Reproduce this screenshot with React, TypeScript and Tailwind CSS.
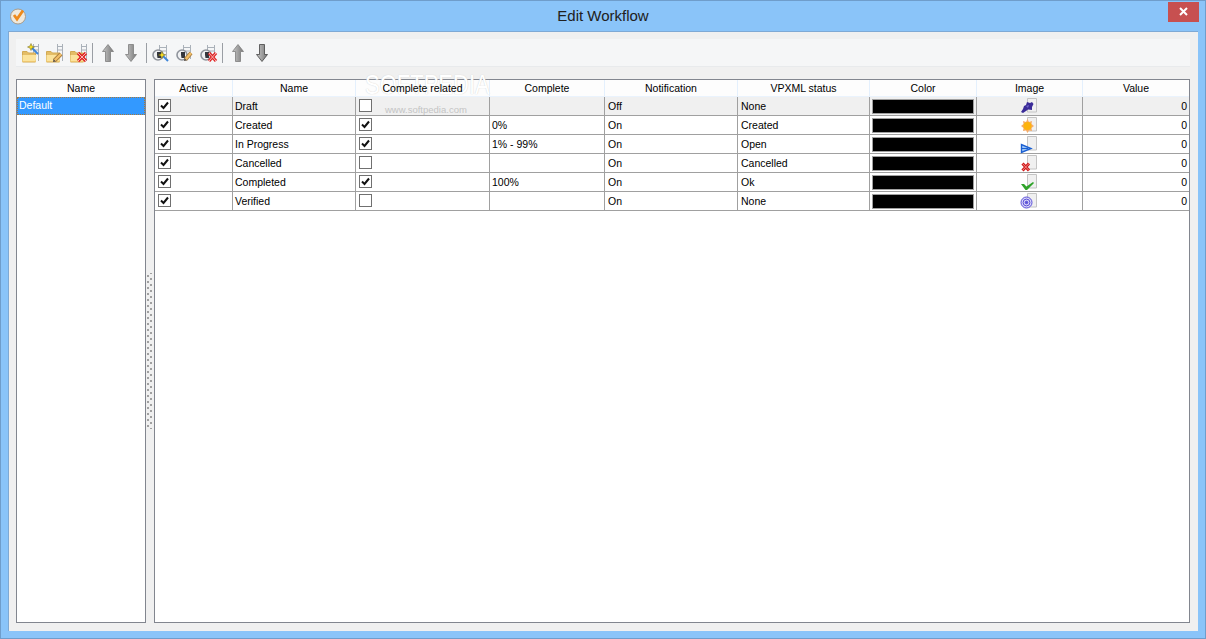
import React from "react";

const cols = ["w-[78px]", "w-[123px]", "w-[134px]", "w-[115px]", "w-[133px]", "w-[132px]", "w-[107px]", "w-[106px]", "w-[106px]"];
const heads = ["Active", "Name", "Complete related", "Complete", "Notification", "VPXML status", "Color", "Image", "Value"];

const rows = [
  { name: "Draft", rel: false, c: "", n: "Off", v: "None", icon: "pin" },
  { name: "Created", rel: true, c: "0%", n: "On", v: "Created", icon: "sun" },
  { name: "In Progress", rel: true, c: "1% - 99%", n: "On", v: "Open", icon: "play" },
  { name: "Cancelled", rel: false, c: "", n: "On", v: "Cancelled", icon: "x" },
  { name: "Completed", rel: true, c: "100%", n: "On", v: "Ok", icon: "check" },
  { name: "Verified", rel: false, c: "", n: "On", v: "None", icon: "target" },
];

function Check({ on }: { on: boolean }) {
  return (
    <div className="w-[13px] h-[13px] border border-[#707070] bg-white flex items-center justify-center">
      {on && (
        <svg width="9" height="9" viewBox="0 0 9 9">
          <path d="M1 4.5 L3.5 7 L8 1.5" fill="none" stroke="#111" strokeWidth="2" />
        </svg>
      )}
    </div>
  );
}

function RowIcon({ kind }: { kind: string }) {
  return (
    <svg width="20" height="19" viewBox="0 0 20 19">
      <path d="M7.5 1.5 H16.5 V15 H7.5 Z" fill="#f0f0f0" stroke="#c4c4c4" />
      {kind === "pin" && (
        <g>
          <path d="M1 15 L3 12 L4 9 L6 8 L7 5 L10 6 L12 5 L13.5 7 L12 10 L12 13 L8 12.5 L6 14 L3 16 Z" fill="#3b2c98" />
          <path d="M6 9 L9 8 L8 11 Z" fill="#6e62c8" />
        </g>
      )}
      {kind === "sun" && (
        <g>
          <path d="M7.5 3 L9 6 L12 5 L11.5 8 L14 10 L11.5 12 L12 15 L9 14.5 L7.5 17 L6 14.5 L3 15 L3.5 12 L1 10 L3.5 8 L3 5 L6 6 Z" fill="#f6ac68" />
          <circle cx="7.5" cy="10" r="4" fill="#fdb30c" />
        </g>
      )}
      {kind === "play" && (
        <g>
          <path d="M1.5 9.5 L1.5 17.5 L11 13.5 Z" fill="#9cc6f6" stroke="#1a5fd2" strokeWidth="1.4" />
          <path d="M2 13.5 H8" stroke="#1a5fd2" />
        </g>
      )}
      {kind === "x" && (
        <g>
          <path d="M2.5 9.5 L9 16.5 M9 9.5 L2.5 16.5" stroke="#d01818" strokeWidth="3" />
          <path d="M2.5 9.5 L9 16.5 M9 9.5 L2.5 16.5" stroke="#f4a0a0" strokeWidth="0.8" />
        </g>
      )}
      {kind === "check" && (
        <path d="M1 11 L4 11 L6.5 13.5 L13 9 L14 10 L7 17 L5.5 17 Z" fill="#2fa32a" />
      )}
      {kind === "target" && (
        <g fill="none" stroke="#5a50d8">
          <circle cx="6.5" cy="10.5" r="5.5" fill="#d8d4f8" />
          <circle cx="6.5" cy="10.5" r="3.4" />
          <circle cx="6.5" cy="10.5" r="1.3" fill="#5a50d8" />
        </g>
      )}
    </svg>
  );
}

function Wand({ x, y, ex, ey }: { x: number; y: number; ex: number; ey: number }) {
  return (
    <g>
      <path d={`M${x} ${y} L${ex} ${ey}`} stroke="#3f86d8" strokeWidth="2" />
      <path
        d={`M${x} ${y - 3.5} L${x + 1} ${y - 1} L${x + 3.5} ${y} L${x + 1} ${y + 1} L${x} ${y + 3.5} L${x - 1} ${y + 1} L${x - 3.5} ${y} L${x - 1} ${y - 1} Z`}
        fill="#f5dc20"
        stroke="#6a6020"
        strokeWidth="0.5"
      />
    </g>
  );
}

function Pen({ sx, sy, ex, ey }: { sx: number; sy: number; ex: number; ey: number }) {
  return (
    <g>
      <path d={`M${sx + 1.5} ${sy - 1.5} L${ex} ${ey}`} stroke="#a87a3a" strokeWidth="4" />
      <path d={`M${sx + 1.5} ${sy - 1.5} L${ex} ${ey}`} stroke="#f2bf68" strokeWidth="2.4" />
      <path d={`M${sx} ${sy} L${sx + 0.5} ${sy - 3} L${sx + 3} ${sy - 0.5} Z`} fill="#5a5048" />
    </g>
  );
}

function Cross({ x1, y1, x2, y2 }: { x1: number; y1: number; x2: number; y2: number }) {
  const d = `M${x1} ${y1} L${x2} ${y2} M${x2} ${y1} L${x1} ${y2}`;
  return (
    <g>
      <path d={`M${x1 + 1} ${y1 + 3} H${x2 - 1} V${y2 - 3} H${x1 + 1} Z`} fill="#f07070" />
      <path d={d} stroke="#e02828" strokeWidth="3.2" />
      <path d={d} stroke="#f8b4b4" strokeWidth="1" />
    </g>
  );
}

function FolderIcon({ mark }: { mark: string }) {
  return (
    <svg width="20" height="20" viewBox="0 0 20 20">
      <path d="M13.5 1 V18 M18.5 1 V18 M13.5 3.5 H18.5 M13.5 7 H18.5" stroke="#aab1b9" fill="none" />
      <path d="M2.5 11 V8.5 H7 L8.5 10 H15.5 V19 H2.5 Z" fill="#e4bd66" stroke="#d2aa54" />
      <path d="M2.5 12 H16.5 L15.5 19 H2.5 Z" fill="#fbe39c" />
      <path d="M3 18.5 H15.5" stroke="#eec66e" />
      {mark === "wand" && <Wand x={11} y={4} ex={18} ey={11} />}
      {mark === "pen" && <Pen sx={9} sy={19} ex={17} ey={11} />}
      {mark === "x" && <Cross x1={10} y1={10} x2={18} y2={18} />}
    </svg>
  );
}

function ClockIcon({ mark }: { mark: string }) {
  return (
    <svg width="20" height="20" viewBox="0 0 20 20">
      <path d="M9.5 2 V16 M16.5 2 V16 M9.5 4.5 H16.5 M9.5 8 H16.5 M9.5 11.5 H16.5" stroke="#aab1b9" fill="none" />
      <circle cx="8" cy="12" r="5" fill="#f0f1f3" stroke="#8f949c" strokeWidth="1.6" />
      <path d="M7 9 H11 V15 H7.5 L7 12 Z" fill="#33363d" />
      {mark === "wand" && <Wand x={12} y={12} ex={18} ey={18} />}
      {mark === "pen" && <Pen sx={10} sy={18} ex={17} ey={10} />}
      {mark === "x" && <Cross x1={11} y1={10} x2={18} y2={18} />}
    </svg>
  );
}

function Arrow({ dir, dark }: { dir: "up" | "down"; dark?: boolean }) {
  const stroke = dark ? "#444" : "#7e7e7e";
  return (
    <svg width="14" height="20" viewBox="0 0 14 20">
      <defs>
        <linearGradient id={dark ? "ad" : "al"} x1="0" x2="1" y1="0" y2="0">
          <stop offset="0" stopColor="#c8c8c8" />
          <stop offset="1" stopColor="#787878" />
        </linearGradient>
      </defs>
      <path
        d={dir === "up" ? "M7 1.5 L12.5 8.5 H9.5 V18.5 H4.5 V8.5 H1.5 Z" : "M7 18.5 L12.5 11.5 H9.5 V1.5 H4.5 V11.5 H1.5 Z"}
        fill={`url(#${dark ? "ad" : "al"})`}
        stroke={stroke}
        strokeWidth="0.8"
      />
    </svg>
  );
}

function Sep() {
  return <div className="w-px h-[20px] bg-[#9a9ea4] shrink-0" />;
}

function Slot({ w, children }: { w: string; children: React.ReactNode }) {
  return <div className={`${w} shrink-0 flex justify-center`}>{children}</div>;
}

export default function App() {
  return (
    <div
      className="w-[1206px] h-[639px] bg-[#8ac4f9] border border-[#6f9dcb] flex flex-col overflow-hidden text-[10.5px] leading-none text-black"
      style={{ fontFamily: '"Liberation Sans", Arial, sans-serif' }}
    >
      <div className="h-[30px] flex items-center shrink-0 relative">
        <svg width="18" height="18" viewBox="0 0 18 18" className="ml-[8px]">
          <circle cx="9" cy="9.5" r="7.5" fill="#efe9dd" stroke="#a89c8c" />
          <path d="M5 8 L8 12 L14 3.5" fill="none" stroke="#ee8a1c" strokeWidth="2.8" />
        </svg>
        <div className="flex-1 text-center text-[15px] text-[#202020] pl-[11px] pb-[1px]">Edit Workflow</div>
        <div className="w-[31px] h-[20px] bg-[#c75050] mr-[6px] -mt-[9px] flex items-center justify-center">
          <svg width="9" height="9" viewBox="0 0 9 9">
            <path d="M1 1 L8 8 M8 1 L1 8" stroke="#fff" strokeWidth="2" />
          </svg>
        </div>
      </div>

      <div className="mx-[7px] mb-[7px] flex-1 bg-[#f0f0f0] border border-[#7fa9d4] border-b-0 border-r-0 pl-[7px] pr-[8px] pt-[7px] pb-[8px] flex flex-col min-h-0">
        <div className="h-[28px] shrink-0 bg-[#f5f6f7] border-b border-[#e8eaec] flex items-center pl-[2px]">
          <Slot w="w-[24px]"><FolderIcon mark="wand" /></Slot>
          <Slot w="w-[24px]"><FolderIcon mark="pen" /></Slot>
          <Slot w="w-[24px]"><FolderIcon mark="x" /></Slot>
          <div className="w-[2px] shrink-0" />
          <Sep />
          <Slot w="w-[30px]"><Arrow dir="up" /></Slot>
          <Slot w="w-[16px]"><Arrow dir="down" /></Slot>
          <div className="w-[7px] shrink-0" />
          <Sep />
          <div className="w-[1px] shrink-0" />
          <Slot w="w-[24px]"><ClockIcon mark="wand" /></Slot>
          <Slot w="w-[24px]"><ClockIcon mark="pen" /></Slot>
          <Slot w="w-[24px]"><ClockIcon mark="x" /></Slot>
          <div className="w-[2px] shrink-0" />
          <Sep />
          <Slot w="w-[30px]"><Arrow dir="up" /></Slot>
          <Slot w="w-[18px]"><Arrow dir="down" dark /></Slot>
        </div>

        <div className="flex flex-1 min-h-0 mt-[12px]">
          <div className="w-[130px] shrink-0 border border-[#82868f] bg-white flex flex-col">
            <div className="h-[17px] flex items-center justify-center bg-[#fdfdfd]">Name</div>
            <div className="h-[18px] bg-[#3399ff] text-white flex items-center pl-[2px] pb-[1px] outline-1 outline-dotted -outline-offset-1 outline-[#a87838]">
              Default
            </div>
          </div>

          <div className="w-[8px] shrink-0 relative flex items-center justify-center">
            <div
              className="w-[6px] h-[156px]"
              style={{
                backgroundImage:
                  "radial-gradient(#a0a0a0 1px, transparent 1px), radial-gradient(#a0a0a0 1px, transparent 1px)",
                backgroundSize: "6px 6px",
                backgroundPosition: "-2px 0, 1px 3px",
              }}
            />
          </div>

          <div className="flex-1 border border-[#82868f] bg-white relative">
            <div className="flex h-[17px] bg-[#fdfdfd] border-b border-[#eaf3fd]">
              {heads.map((h, i) => (
                <div
                  key={h}
                  className={`${cols[i]} shrink-0 flex items-center justify-center border-r border-[#e4f0fd] last:border-r-0 relative z-10`}
                >
                  {h}
                </div>
              ))}
            </div>
            {rows.map((r, ri) => (
              <div
                key={r.name}
                className={`flex h-[19px] border-b border-[#a0a0a0] ${ri === 0 ? "bg-[#f0f0f0]" : ""}`}
              >
                <div className={`${cols[0]} shrink-0 border-r border-[#a0a0a0] flex items-center pl-[3px] pb-[1px]`}>
                  <Check on />
                </div>
                <div className={`${cols[1]} shrink-0 border-r border-[#a0a0a0] flex items-center pl-[2px]`}>{r.name}</div>
                <div className={`${cols[2]} shrink-0 border-r border-[#a0a0a0] flex items-center pl-[3px] pb-[1px]`}>
                  <Check on={r.rel} />
                </div>
                <div className={`${cols[3]} shrink-0 border-r border-[#a0a0a0] flex items-center pl-[2px]`}>{r.c}</div>
                <div className={`${cols[4]} shrink-0 border-r border-[#a0a0a0] flex items-center pl-[3px]`}>{r.n}</div>
                <div className={`${cols[5]} shrink-0 border-r border-[#a0a0a0] flex items-center pl-[3px]`}>{r.v}</div>
                <div className={`${cols[6]} shrink-0 border-r border-[#a0a0a0] flex items-center px-[2px]`}>
                  <div className="flex-1 h-[15px] bg-black border border-[#a0a0a0]" />
                </div>
                <div className={`${cols[7]} shrink-0 border-r border-[#a0a0a0] flex items-center justify-center`}>
                  <RowIcon kind={r.icon} />
                </div>
                <div className={`${cols[8]} shrink-0 flex items-center justify-end pr-[2px]`}>0</div>
              </div>
            ))}
            <div className="absolute left-[210px] top-[-10px] text-[22px] leading-[30px] scale-y-125 text-[#ffffff] [text-shadow:0_0_1px_#c8c8c8] pointer-events-none">
              SOFTPEDIA
            </div>
            <div className="absolute left-[230px] top-[25px] text-[9.5px] text-[#c4c4c4] pointer-events-none">
              www.softpedia.com
            </div>
          </div>
        </div>
      </div>
    </div>
  );
}
